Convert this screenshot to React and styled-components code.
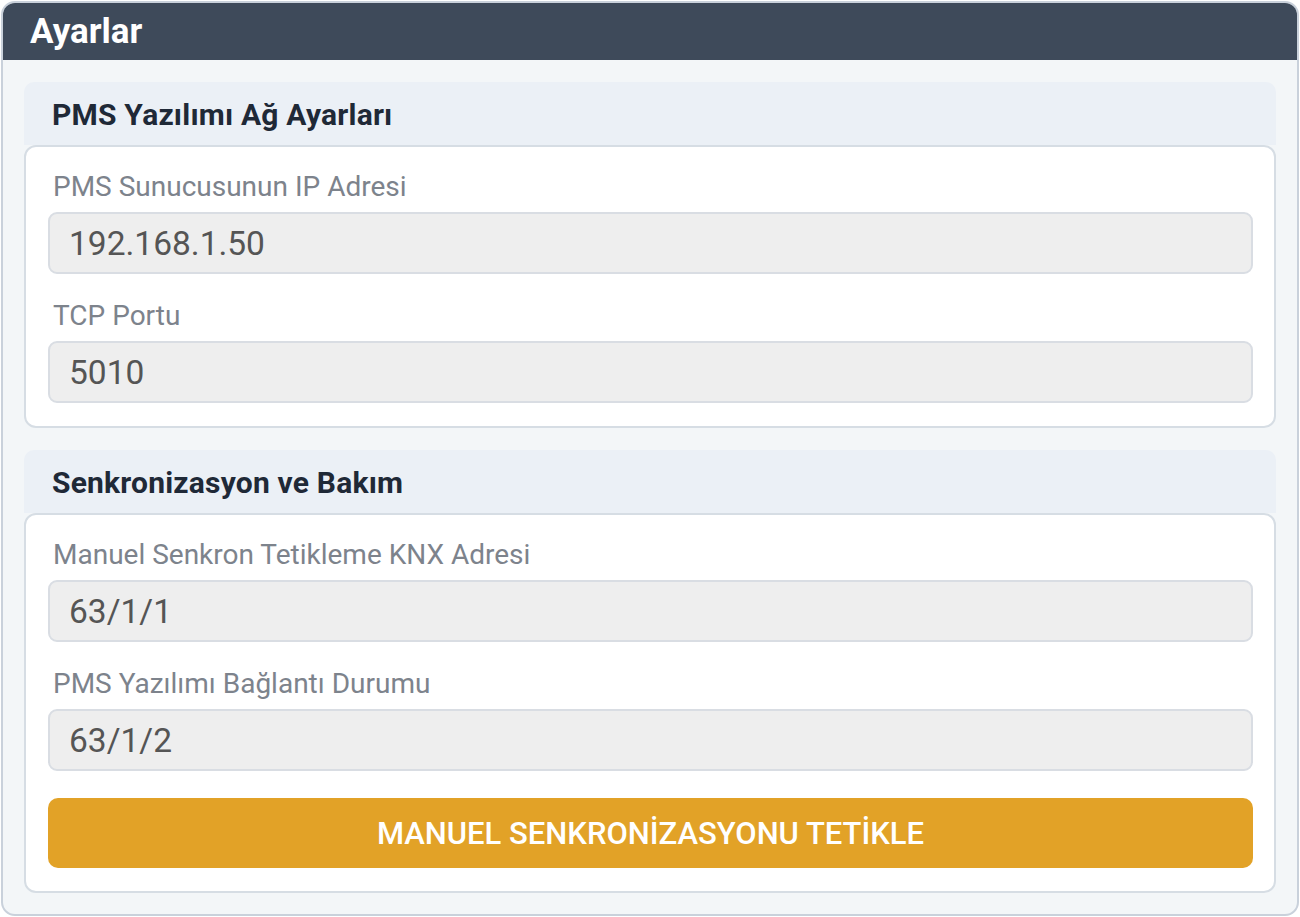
import React from "react"
import styled, { createGlobalStyle } from "styled-components"

const GlobalStyle = createGlobalStyle`
  html, body {
    margin: 0;
    padding: 0;
    background: #ffffff;
  }
  body {
    font-family: Roboto, "Noto Sans", "DejaVu Sans", sans-serif;
  }
  * {
    box-sizing: border-box;
  }
`

const sections = [
  {
    title: "PMS Yazılımı Ağ Ayarları",
    fields: [
      { label: "PMS Sunucusunun IP Adresi", value: "192.168.1.50" },
      { label: "TCP Portu", value: "5010" },
    ],
  },
  {
    title: "Senkronizasyon ve Bakım",
    fields: [
      { label: "Manuel Senkron Tetikleme KNX Adresi", value: "63/1/1" },
      { label: "PMS Yazılımı Bağlantı Durumu", value: "63/1/2" },
    ],
    action: "MANUEL SENKRONİZASYONU TETİKLE",
  },
]

const App = () => {
  return (
    <>
      <GlobalStyle />
      <Panel>
        <PanelHeader>
          <PanelTitle>Ayarlar</PanelTitle>
        </PanelHeader>
        <PanelBody>
          {sections.map((section) => (
            <Section key={section.title}>
              <SectionHeader>{section.title}</SectionHeader>
              <Card>
                {section.fields.map((field) => (
                  <Field key={field.label}>
                    <Label>{field.label}</Label>
                    <Input readOnly value={field.value} />
                  </Field>
                ))}
                {section.action && <ActionButton>{section.action}</ActionButton>}
              </Card>
            </Section>
          ))}
        </PanelBody>
      </Panel>
    </>
  )
}

export default App

const Panel = styled.div`
  margin: 1px;
  width: 1298px;
  height: 915px;
  border: 2px solid #c9d1db;
  border-radius: 14px;
  overflow: hidden;
  background: #f3f6f8;
  display: flex;
  flex-direction: column;
`

const PanelHeader = styled.header`
  height: 58px;
  background: #3e4a5a;
  display: flex;
  align-items: center;
  padding: 0 27px;
`

const PanelTitle = styled.h1`
  margin: 0;
  color: #ffffff;
  font-size: 35px;
  font-weight: 700;
`

const PanelBody = styled.div`
  flex: 1;
  padding: 22px 21px 21px 21px;
  display: flex;
  flex-direction: column;
  gap: 22px;
`

const Section = styled.section`
  display: flex;
  flex-direction: column;
`

const SectionHeader = styled.h2`
  margin: 0;
  height: 63px;
  display: flex;
  align-items: center;
  padding: 1px 28px 0;
  background: #ebf0f6;
  border-radius: 10px 10px 0 0;
  color: #1f2937;
  font-size: 30px;
  font-weight: 700;
  letter-spacing: 0.2px;
`

const Card = styled.div`
  background: #ffffff;
  border: 2px solid #d6dde4;
  border-radius: 12px;
  padding: 24px 21px 23px 22px;
  display: flex;
  flex-direction: column;
  gap: 26px;
`

const Field = styled.div`
  display: flex;
  flex-direction: column;
  gap: 9px;
`

const Label = styled.label`
  height: 32px;
  line-height: 32px;
  padding-left: 5px;
  color: #7d838c;
  font-size: 28px;
`

const Input = styled.input`
  height: 62px;
  width: 100%;
  background: #eeeeee;
  border: 2px solid #d9dde3;
  border-radius: 9px;
  padding: 0 19px;
  color: #555555;
  font-family: inherit;
  font-size: 33.5px;
  outline: none;
`

const ActionButton = styled.button`
  height: 70px;
  margin-top: 1px;
  border: none;
  border-radius: 10px;
  background: #e2a227;
  color: #ffffff;
  font-family: inherit;
  font-size: 31px;
  font-weight: 500;
  cursor: pointer;
`
